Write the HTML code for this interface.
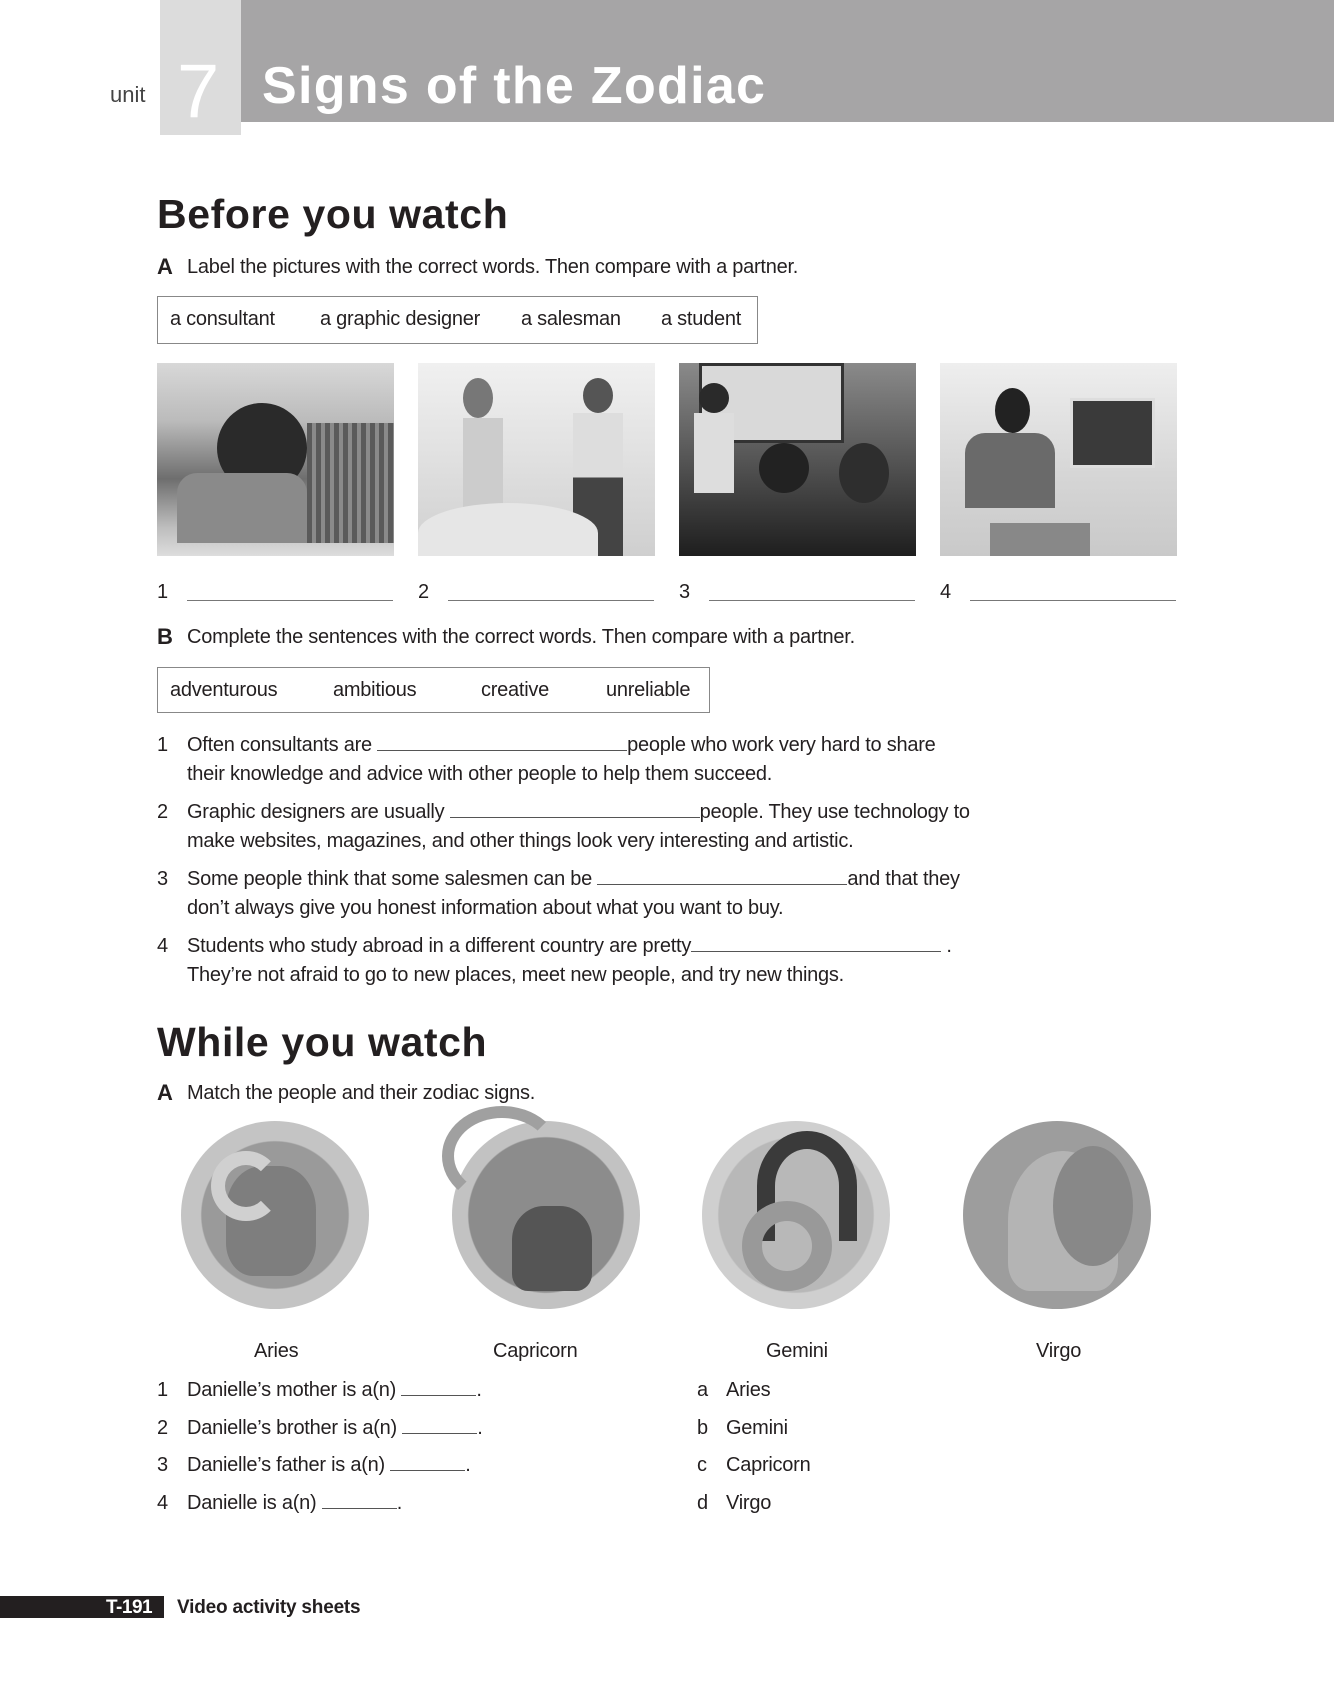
<!DOCTYPE html>
<html><head><meta charset="utf-8"><style>
*{margin:0;padding:0;box-sizing:border-box}
body{width:1334px;height:1690px;background:#fff;position:relative;font-family:"Liberation Sans",sans-serif;color:#231f20;overflow:hidden}
.a{position:absolute;white-space:nowrap}
.t{font-size:20px;letter-spacing:-0.25px;line-height:24px}
.h{font-weight:bold;font-size:41px;letter-spacing:0.6px}
.bl{display:inline-block;border-bottom:1px solid #555;height:18px;vertical-align:baseline}
.ph{position:absolute;top:363px;width:237px;height:193px;overflow:hidden}
.ln{position:absolute;top:600px;height:1px;background:#777;width:206px}
.c{position:absolute;top:1121px;width:188px;height:188px;border-radius:50%}
.lb{position:absolute;left:187px}
</style></head><body>
<div class="a" style="left:160px;top:0;width:81px;height:135px;background:#dcdcdc"></div>
<div class="a" style="left:241px;top:0;width:1093px;height:122px;background:#a6a5a6"></div>
<div class="a" style="left:110px;top:82px;font-size:22px;color:#444">unit</div>
<div class="a" style="left:177px;top:48px;font-size:76px;color:#fff;font-weight:300">7</div>
<div class="a" style="left:262px;top:56px;font-size:52px;font-weight:bold;color:#fff;letter-spacing:1.3px">Signs of the Zodiac</div>

<div class="a h" style="left:157px;top:191px">Before you watch</div>
<div class="a t" style="left:157px;top:255px"><b style="font-size:22px">A</b></div><div class="a t lb" style="top:255px">Label the pictures with the correct words. Then compare with a partner.</div>
<div class="a" style="left:157px;top:296px;width:601px;height:48px;border:1px solid #888"></div>
<div class="a t" style="left:170px;top:307px">a consultant</div>
<div class="a t" style="left:320px;top:307px">a graphic designer</div>
<div class="a t" style="left:521px;top:307px">a salesman</div>
<div class="a t" style="left:661px;top:307px">a student</div>

<div class="ph" style="left:157px;background:linear-gradient(180deg,#d8d8d8 0,#bbb 30%,#6e6e6e 60%,#bdbdbd 85%,#ddd 100%)">
<div style="position:absolute;left:60px;top:40px;width:90px;height:90px;border-radius:50%;background:#2a2a2a"></div>
<div style="position:absolute;left:20px;top:110px;width:130px;height:70px;background:#8a8a8a;border-radius:20px 20px 0 0"></div>
<div style="position:absolute;left:150px;top:60px;width:87px;height:120px;background:repeating-linear-gradient(90deg,#5a5a5a 0 5px,#8a8a8a 5px 9px)"></div></div>
<div class="ph" style="left:418px;background:linear-gradient(180deg,#f0f0f0,#e0e0e0 50%,#cfcfcf)">
<div style="position:absolute;left:45px;top:15px;width:30px;height:40px;border-radius:50%;background:#777"></div>
<div style="position:absolute;left:45px;top:55px;width:40px;height:100px;background:#ccc"></div>
<div style="position:absolute;left:165px;top:15px;width:30px;height:35px;border-radius:50%;background:#555"></div>
<div style="position:absolute;left:155px;top:50px;width:50px;height:143px;background:linear-gradient(#ddd 0 45%,#444 45%)"></div>
<div style="position:absolute;left:0;top:140px;width:180px;height:60px;border-radius:50% 50% 0 0;background:#e6e6e6"></div></div>
<div class="ph" style="left:679px;background:linear-gradient(180deg,#8a8a8a,#555 50%,#1e1e1e)">
<div style="position:absolute;left:20px;top:0;width:145px;height:80px;background:#d9d9d9;border:3px solid #333"></div>
<div style="position:absolute;left:20px;top:20px;width:30px;height:30px;border-radius:50%;background:#2a2a2a"></div>
<div style="position:absolute;left:15px;top:50px;width:40px;height:80px;background:#ddd"></div>
<div style="position:absolute;left:80px;top:80px;width:50px;height:50px;border-radius:50%;background:#222"></div>
<div style="position:absolute;left:160px;top:80px;width:50px;height:60px;border-radius:50%;background:#2e2e2e"></div></div>
<div class="ph" style="left:940px;background:linear-gradient(180deg,#eee,#d5d5d5 60%,#c9c9c9)">
<div style="position:absolute;left:55px;top:25px;width:35px;height:45px;border-radius:50%;background:#222"></div>
<div style="position:absolute;left:25px;top:70px;width:90px;height:75px;background:#6a6a6a;border-radius:20px 20px 0 0"></div>
<div style="position:absolute;left:130px;top:35px;width:85px;height:70px;background:#3a3a3a;border:3px solid #ddd"></div>
<div style="position:absolute;left:50px;top:160px;width:100px;height:33px;background:#888"></div></div>

<div class="a t" style="left:157px;top:580px">1</div><div class="ln" style="left:187px"></div>
<div class="a t" style="left:418px;top:580px">2</div><div class="ln" style="left:448px"></div>
<div class="a t" style="left:679px;top:580px">3</div><div class="ln" style="left:709px"></div>
<div class="a t" style="left:940px;top:580px">4</div><div class="ln" style="left:970px"></div>

<div class="a t" style="left:157px;top:625px"><b style="font-size:22px">B</b></div><div class="a t lb" style="top:625px">Complete the sentences with the correct words. Then compare with a partner.</div>
<div class="a" style="left:157px;top:667px;width:553px;height:46px;border:1px solid #888"></div>
<div class="a t" style="left:170px;top:678px">adventurous</div>
<div class="a t" style="left:333px;top:678px">ambitious</div>
<div class="a t" style="left:481px;top:678px">creative</div>
<div class="a t" style="left:606px;top:678px">unreliable</div>

<div class="a t" style="left:157px;top:733px">1</div>
<div class="a t" style="left:187px;top:733px">Often consultants are <span class="bl" style="width:250px"></span>people who work very hard to share</div>
<div class="a t" style="left:187px;top:762px">their knowledge and advice with other people to help them succeed.</div>
<div class="a t" style="left:157px;top:800px">2</div>
<div class="a t" style="left:187px;top:800px">Graphic designers are usually <span class="bl" style="width:250px"></span>people. They use technology to</div>
<div class="a t" style="left:187px;top:829px">make websites, magazines, and other things look very interesting and artistic.</div>
<div class="a t" style="left:157px;top:867px">3</div>
<div class="a t" style="left:187px;top:867px">Some people think that some salesmen can be <span class="bl" style="width:250px"></span>and that they</div>
<div class="a t" style="left:187px;top:896px">don’t always give you honest information about what you want to buy.</div>
<div class="a t" style="left:157px;top:934px">4</div>
<div class="a t" style="left:187px;top:934px">Students who study abroad in a different country are pretty<span class="bl" style="width:250px"></span> .</div>
<div class="a t" style="left:187px;top:963px">They’re not afraid to go to new places, meet new people, and try new things.</div>

<div class="a h" style="left:157px;top:1019px">While you watch</div>
<div class="a t" style="left:157px;top:1081px"><b style="font-size:22px">A</b></div><div class="a t lb" style="top:1081px">Match the people and their zodiac signs.</div>

<div class="c" style="left:181px;background:radial-gradient(circle,#9a9a9a 0 55%,#c4c4c4 56% 88%,#d8d8d8 89%)"><div style="position:absolute;left:45px;top:45px;width:90px;height:110px;border-radius:40% 40% 30% 30%;background:#7e7e7e"></div><div style="position:absolute;left:30px;top:30px;width:70px;height:70px;border-radius:50%;border:14px solid #d0d0d0;border-right-color:transparent"></div></div>
<div class="c" style="left:452px;background:radial-gradient(circle,#8c8c8c 0 58%,#c2c2c2 59% 88%,#dadada 89%)"><div style="position:absolute;left:60px;top:85px;width:80px;height:85px;border-radius:40% 40% 20% 20%;background:#555"></div><div style="position:absolute;left:-10px;top:-15px;width:120px;height:100px;border-radius:50%;border:12px solid #a0a0a0;border-bottom-color:transparent;border-right-color:transparent"></div></div>
<div class="c" style="left:702px;background:radial-gradient(circle,#b8b8b8 0 58%,#cfcfcf 59% 88%,#e2e2e2 89%)"><div style="position:absolute;left:55px;top:10px;width:100px;height:110px;border-radius:50% 50% 0 0;border:18px solid #3a3a3a;border-bottom:none"></div><div style="position:absolute;left:40px;top:80px;width:90px;height:90px;border-radius:50%;border:20px solid #999"></div></div>
<div class="c" style="left:963px;background:radial-gradient(circle,#9d9d9d 0 82%,#8a8a8a 83% 90%,#d0d0d0 91%)"><div style="position:absolute;left:45px;top:30px;width:110px;height:140px;border-radius:50% 50% 20% 20%;background:#b4b4b4"></div><div style="position:absolute;left:90px;top:25px;width:80px;height:120px;border-radius:50%;background:#888"></div></div>

<div class="a t" style="left:254px;top:1339px">Aries</div>
<div class="a t" style="left:493px;top:1339px">Capricorn</div>
<div class="a t" style="left:766px;top:1339px">Gemini</div>
<div class="a t" style="left:1036px;top:1339px">Virgo</div>

<div class="a t" style="left:157px;top:1378px">1</div><div class="a t lb" style="top:1378px">Danielle’s mother is a(n) <span class="bl" style="width:75px"></span>.</div>
<div class="a t" style="left:157px;top:1416px">2</div><div class="a t lb" style="top:1416px">Danielle’s brother is a(n) <span class="bl" style="width:75px"></span>.</div>
<div class="a t" style="left:157px;top:1453px">3</div><div class="a t lb" style="top:1453px">Danielle’s father is a(n) <span class="bl" style="width:75px"></span>.</div>
<div class="a t" style="left:157px;top:1491px">4</div><div class="a t lb" style="top:1491px">Danielle is a(n) <span class="bl" style="width:75px"></span>.</div>
<div class="a t" style="left:697px;top:1378px">a</div><div class="a t" style="left:726px;top:1378px">Aries</div>
<div class="a t" style="left:697px;top:1416px">b</div><div class="a t" style="left:726px;top:1416px">Gemini</div>
<div class="a t" style="left:697px;top:1453px">c</div><div class="a t" style="left:726px;top:1453px">Capricorn</div>
<div class="a t" style="left:697px;top:1491px">d</div><div class="a t" style="left:726px;top:1491px">Virgo</div>

<div class="a" style="left:0;top:1596px;width:164px;height:22px;background:#231f20"></div>
<div class="a" style="left:106px;top:1597px;font-size:19px;font-weight:bold;color:#fff;letter-spacing:-0.5px">T-191</div>
<div class="a" style="left:177px;top:1597px;font-size:19px;font-weight:bold;letter-spacing:-0.2px">Video activity sheets</div>
</body></html>
